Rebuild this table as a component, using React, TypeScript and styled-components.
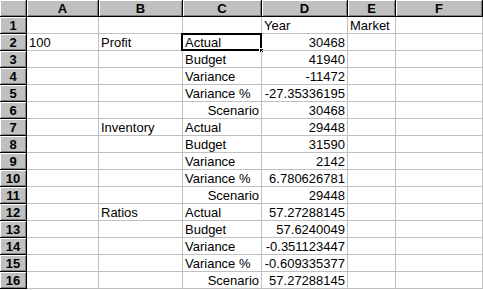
import React from "react";
import styled, { createGlobalStyle } from "styled-components";

const GlobalStyle = createGlobalStyle`
  html, body {
    margin: 0;
    padding: 0;
    background: #ffffff;
    overflow: hidden;
  }
  body {
    font-family: "Liberation Sans", Arial, sans-serif;
  }
`;

const COLS = ["A", "B", "C", "D", "E", "F"];

const Sheet = styled.div`
  display: grid;
  grid-template-columns: 27px 72px 84px 79px 86px 48px 87px;
  grid-auto-rows: 17px;
  width: 483px;
  background: #ffffff;
`;

const HeaderCell = styled.div`
  box-sizing: border-box;
  background: #c0c0c0;
  border-right: 1px solid #000000;
  border-bottom: 1px solid #000000;
  box-shadow: inset 1px 1px 0 #ffffff, inset -1px -1px 0 #808080;
  display: flex;
  align-items: center;
  justify-content: center;
  padding-top: 1px;
  font-size: 13px;
  font-weight: bold;
  color: #000000;
  line-height: 15px;
`;

const Cell = styled.div<{ $align?: "left" | "right" }>`
  box-sizing: border-box;
  position: relative;
  border-right: 1px solid #c0c0c0;
  border-bottom: 1px solid #c0c0c0;
  padding: 1px 2px 0;
  font-size: 13px;
  line-height: 16px;
  color: #000000;
  text-align: ${(p) => p.$align ?? "left"};
  white-space: nowrap;
  overflow: visible;
`;

const Selection = styled.div`
  position: absolute;
  top: -1px;
  left: -2px;
  right: -1px;
  bottom: -1px;
  border: 2px solid #000000;
  pointer-events: none;
`;

const FillHandle = styled.div`
  position: absolute;
  right: -4px;
  bottom: -4px;
  width: 5px;
  height: 5px;
  background: #000000;
  border: 1px solid #ffffff;
  box-sizing: border-box;
`;

type Row = [string, string, string, string, string, string];

const rows: Row[] = [
  ["", "", "", "Year", "Market", ""],
  ["100", "Profit", "Actual", "30468", "", ""],
  ["", "", "Budget", "41940", "", ""],
  ["", "", "Variance", "-11472", "", ""],
  ["", "", "Variance %", "-27.35336195", "", ""],
  ["", "", "Scenario", "30468", "", ""],
  ["", "Inventory", "Actual", "29448", "", ""],
  ["", "", "Budget", "31590", "", ""],
  ["", "", "Variance", "2142", "", ""],
  ["", "", "Variance %", "6.780626781", "", ""],
  ["", "", "Scenario", "29448", "", ""],
  ["", "Ratios", "Actual", "57.27288145", "", ""],
  ["", "", "Budget", "57.6240049", "", ""],
  ["", "", "Variance", "-0.351123447", "", ""],
  ["", "", "Variance %", "-0.609335377", "", ""],
  ["", "", "Scenario", "57.27288145", "", ""],
];

const isNumber = (v: string) => v !== "" && !isNaN(Number(v));

const App = () => {
  return (
    <>
      <GlobalStyle />
      <Sheet>
        <HeaderCell />
        {COLS.map((c) => (
          <HeaderCell key={c}>{c}</HeaderCell>
        ))}
        {rows.map((row, r) => (
          <React.Fragment key={r}>
            <HeaderCell>{r + 1}</HeaderCell>
            {row.map((value, c) => {
              // numbers in column A stay as text, Scenario sits on the right
              const right =
                (c > 0 && isNumber(value)) || value === "Scenario";
              const selected = r === 1 && c === 2;
              return (
                <Cell key={c} $align={right ? "right" : "left"}>
                  {value}
                  {selected && (
                    <Selection>
                      <FillHandle />
                    </Selection>
                  )}
                </Cell>
              );
            })}
          </React.Fragment>
        ))}
      </Sheet>
    </>
  );
};

export default App;
